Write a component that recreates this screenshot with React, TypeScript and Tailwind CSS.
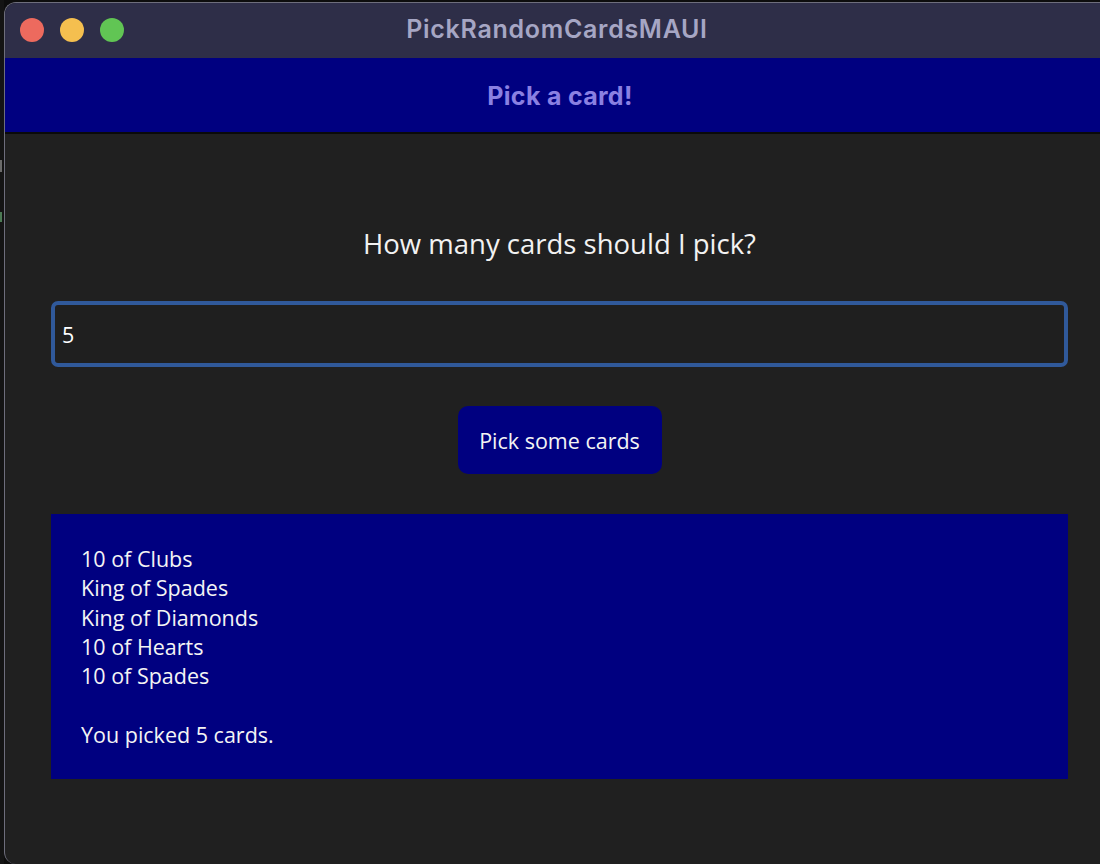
import { useState } from "react";

const picked = ["10 of Clubs", "King of Spades", "King of Diamonds", "10 of Hearts", "10 of Spades"];

export default function App() {
  const [count, setCount] = useState("5");

  return (
    <div className="w-[1100px] h-[864px] bg-[#0d0d0d] flex overflow-hidden">
      {/* bit of desktop peeking out on the left */}
      <div className="w-[4px] h-full bg-[#141414] flex flex-col pt-[160px] gap-[40px]">
        <div className="w-[2px] h-[12px] bg-[#6b6b6b]" />
        <div className="w-[2px] h-[10px] bg-[#4c7a55]" />
      </div>

      <div className="flex-1 mt-[2px] flex flex-col rounded-tl-[12px] rounded-bl-[12px] border-l border-t border-[#6e6e7c] overflow-hidden bg-[#202020]">
        {/* title bar */}
        <div className="h-[55px] shrink-0 bg-[#2e2e48] flex items-center relative">
          <div className="absolute left-[15px] top-[15px] flex gap-[16px]">
            <span className="w-[24px] h-[24px] rounded-full bg-[#ed6a5e]" />
            <span className="w-[24px] h-[24px] rounded-full bg-[#f5bf4f]" />
            <span className="w-[24px] h-[24px] rounded-full bg-[#61c554]" />
          </div>
          <div className="flex-1 flex justify-center pl-[9px] pb-[1px] font-['Inter',sans-serif] font-semibold text-[25px] text-[#a6a6c4] tracking-[0.7px]">
            PickRandomCardsMAUI
          </div>
        </div>

        {/* navigation header */}
        <div className="h-[76px] shrink-0 bg-[#000080] border-b-2 border-[#0a0a0a] flex items-center justify-center pl-[15px] pt-[4px] font-['Inter',sans-serif] font-bold text-[25px] text-[#8a80e2] tracking-[0.3px]">
          Pick a card!
        </div>

        {/* page */}
        <div className="flex-1 flex flex-col pl-[46px] pr-[32px] font-['Open_Sans',sans-serif]">
          <p className="mt-[93px] text-center text-[27.5px] leading-[34px] text-[#f2f2f2]">
            How many cards should I pick?
          </p>

          <input
            value={count}
            onChange={(e) => setCount(e.target.value)}
            className="mt-[40px] h-[66px] w-full rounded-[7px] border-[4px] border-[#30599a] bg-[#1f1f1f] px-[7px] text-[21.5px] text-white outline-none"
          />

          <div className="mt-[39px] flex justify-center">
            <button className="w-[204px] h-[68px] rounded-[10px] bg-[#000080] pt-[2px] text-[21.5px] text-[#f4f4f4]">
              Pick some cards
            </button>
          </div>

          <div className="mt-[40px] h-[265px] bg-[#000080] pl-[30px] pt-[30px] text-[21.5px] leading-[29.3px] text-[#f4f4f4]">
            {picked.map((c) => (
              <div key={c}>{c}</div>
            ))}
            <div>&nbsp;</div>
            <div>You picked {count} cards.</div>
          </div>
        </div>
      </div>
    </div>
  );
}
